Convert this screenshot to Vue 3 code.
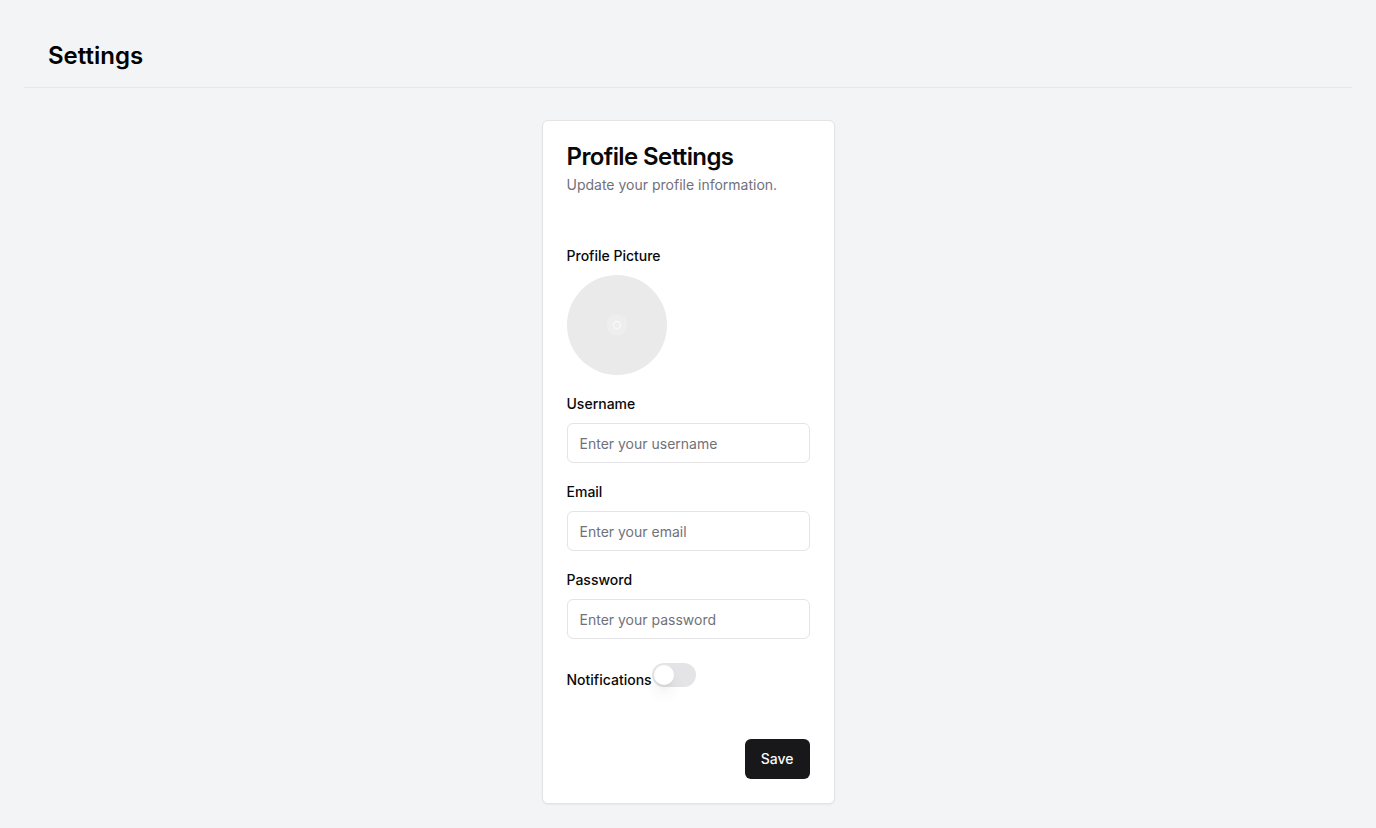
<script setup>
const fields = [
  { id: 'username', label: 'Username', type: 'text', hint: 'Enter your username' },
  { id: 'email', label: 'Email', type: 'email', hint: 'Enter your email' },
  { id: 'password', label: 'Password', type: 'password', hint: 'Enter your password' },
]
</script>

<template>
  <div class="page">
    <header class="top"><h1>Settings</h1></header>
    <main class="content">
      <form class="card" @submit.prevent>
        <div class="card-head">
          <h2>Profile Settings</h2>
          <p>Update your profile information.</p>
        </div>
        <div class="card-body">
          <div class="field">
            <span class="label">Profile Picture</span>
            <svg class="avatar" viewBox="0 0 100 100" role="img" aria-label="Profile picture">
              <circle cx="50" cy="50" r="50" fill="#eaeaea" />
              <circle cx="50" cy="50" r="10.5" fill="#eeeeee" />
              <circle cx="50" cy="50" r="3.5" fill="none" stroke="#f8f8f8" stroke-width="1.3" />
            </svg>
          </div>
          <div v-for="f in fields" :key="f.id" class="field">
            <label class="label" :for="f.id">{{ f.label }}</label>
            <input :id="f.id" class="text" :type="f.type" :placeholder="f.hint" />
          </div>
          <div class="toggle-row">
            <label class="label" for="notifications">Notifications</label>
            <input id="notifications" class="switch" type="checkbox" role="switch" />
          </div>
        </div>
        <div class="card-foot"><button class="save" type="submit">Save</button></div>
      </form>
    </main>
  </div>
</template>

<style>
body { background: #f3f4f6; }
</style>

<style scoped>
.page, .page * { box-sizing: border-box; }
.page {
  min-height: 100vh;
  padding: 24px;
  background: #f3f4f6;
  color: #09090b;
  font: 14px/20px Inter, sans-serif;
}
h1, h2, p { margin: 0; }
.top { padding: 16px 24px; border-bottom: 1px solid #e5e7eb; }
h1 { font-size: 24px; line-height: 31px; font-weight: 600; color: #000; }
.content { display: flex; justify-content: center; padding-top: 32px; }
.card {
  border: 1px solid #e4e4e7;
  border-radius: 6px;
  background: #fff;
  box-shadow: 0 1px 2px rgba(0, 0, 0, 0.05);
}
.card-head { padding: 24px; }
h2 { font-size: 24px; line-height: 24px; font-weight: 600; letter-spacing: -0.025em; }
p { margin-top: 6px; color: #71717a; }
.card-body { display: flex; flex-direction: column; gap: 22px; padding: 30px 24px 24px; }
.field { display: flex; flex-direction: column; gap: 12px; }
.label { font-size: 14px; line-height: 14px; font-weight: 500; }
.avatar { display: block; width: 100px; height: 100px; }
.text {
  width: 243px;
  height: 40px;
  padding: 8px 12px;
  border: 1px solid #e4e4e7;
  border-radius: 6px;
  background: #fff;
  color: #09090b;
  font: 14px/20px Inter, sans-serif;
}
.text::placeholder { color: #71717a; opacity: 1; }
.toggle-row { display: flex; align-items: flex-end; padding-top: 2px; }
.switch {
  appearance: none;
  display: flex;
  width: 44px;
  height: 24px;
  margin: 0;
  padding: 2px;
  border-radius: 12px;
  background: #e4e4e7;
  cursor: pointer;
}
.switch::before {
  content: "";
  width: 20px;
  height: 20px;
  border-radius: 50%;
  background: #fff;
  box-shadow: 0 10px 15px -3px rgba(0, 0, 0, 0.1), 0 4px 6px -4px rgba(0, 0, 0, 0.1);
}
.switch:checked { background: #18181b; }
.switch:checked::before { margin-left: 20px; }
.card-foot { display: flex; justify-content: flex-end; padding: 28px 24px 24px; }
.save {
  height: 40px;
  padding: 8px 16px;
  border: 0;
  border-radius: 6px;
  background: #18181b;
  color: #fafafa;
  font: 500 14px/20px Inter, sans-serif;
  cursor: pointer;
}
</style>
